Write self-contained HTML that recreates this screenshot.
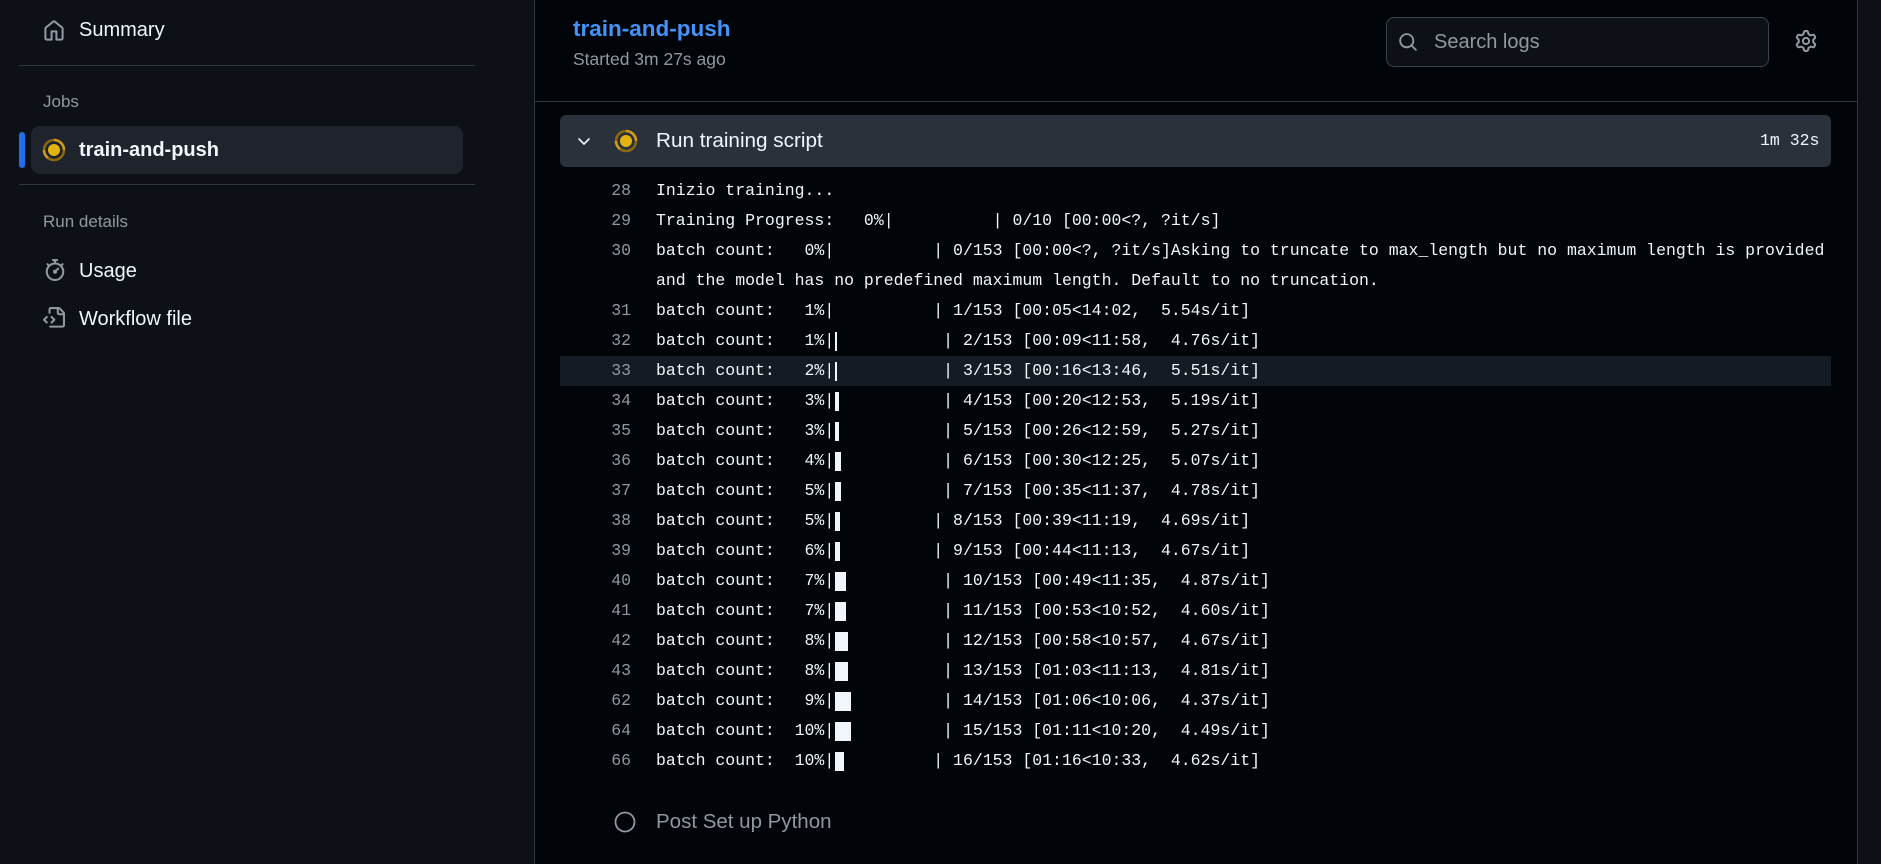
<!DOCTYPE html>
<html><head><meta charset="utf-8"><style>
*{margin:0;padding:0;box-sizing:border-box}
body{width:1881px;height:864px;background:#010409;overflow:hidden;position:relative;font-family:"Liberation Sans",sans-serif;color:#f0f6fc}
.abs{position:absolute}
#side{left:0;top:0;width:535px;height:864px;background:#0d1117;border-right:1px solid #30363d}
#rstrip{left:1857px;top:0;width:24px;height:864px;background:#0d1117;border-left:1px solid #30363d}
.nav{position:absolute;left:79px;font-size:20px;line-height:24px;color:#f0f6fc}
.hdr{position:absolute;left:43px;font-size:17px;color:#9198a1;line-height:20px}
.ico{position:absolute;fill:#9198a1}
.hr{position:absolute;left:19px;width:456px;height:1px;background:#30363d}
.log{position:absolute;left:560px;width:1271px;height:30px;font-family:"Liberation Mono","DejaVu Sans Mono",monospace;font-size:16.5px;line-height:30px;white-space:pre;color:#f0f6fc}
.log .n{position:absolute;right:1200px;color:#9198a1;text-align:right}
.log .t{position:absolute;left:96px}
.b{display:inline-block;position:relative;height:30px;vertical-align:top}
.b i{position:absolute;left:1px;top:6px;height:19px;background:#f0f6fc}
</style></head><body>
<div id="side" class="abs"></div>
<div id="rstrip" class="abs"></div>

<svg class="ico" style="left:43px;top:20px" width="22" height="22" viewBox="0 0 16 16"><path d="M6.906.664a1.749 1.749 0 0 1 2.187 0l5.25 4.2c.415.332.657.835.657 1.367v7.019A1.75 1.75 0 0 1 13.25 15h-3.5a.75.75 0 0 1-.75-.75V9H7v5.25a.75.75 0 0 1-.75.75h-3.5A1.75 1.75 0 0 1 1 13.25V6.23c0-.531.242-1.034.657-1.366l5.25-4.2Zm1.25 1.171a.25.25 0 0 0-.312 0l-5.250 4.2a.25.25 0 0 0-.094.196v7.019c0 .138.112.25.25.25H5.5V8.25a.75.75 0 0 1 .75-.75h3.5a.75.75 0 0 1 .75.75v5.25h2.75a.25.25 0 0 0 .25-.25V6.23a.25.25 0 0 0-.094-.195Z"/></svg>
<div class="nav" style="top:18px">Summary</div>
<div class="hr" style="top:65px"></div>
<div class="hdr" style="top:92px">Jobs</div>
<div class="abs" style="left:19px;top:132px;width:6px;height:36px;border-radius:3px;background:#1f6feb"></div>
<div class="abs" style="left:31px;top:126px;width:432px;height:48px;border-radius:9px;background:#1f242c"></div>
<svg class="abs" style="left:42px;top:138px" width="24" height="24" viewBox="0 0 24 24"><circle cx="12" cy="12" r="10" fill="none" stroke="#8a6a0e" stroke-width="2.5"/><path d="M12 2a10 10 0 0 1 10 10" fill="none" stroke="#d29922" stroke-width="2.5"/><path d="M2 12a10 10 0 0 0 4 8" fill="none" stroke="#d29922" stroke-width="2.5"/><circle cx="12" cy="12" r="6" fill="#e3b30f"/></svg>
<div class="nav" style="top:138px;font-weight:bold">train-and-push</div>
<div class="hr" style="top:184px"></div>
<div class="hdr" style="top:212px">Run details</div>
<svg class="ico" style="left:44px;top:259px" width="22" height="22" viewBox="0 0 16 16"><path d="M5.75.75A.75.75 0 0 1 6.5 0h3a.75.75 0 0 1 0 1.5h-.75v1l-.001.041a6.724 6.724 0 0 1 3.464 1.435l.007-.006.75-.75a.749.749 0 0 1 1.275.326.749.749 0 0 1-.215.734l-.75.75-.006.007a6.75 6.75 0 1 1-10.548 0L2.72 5.03l-.75-.75a.751.751 0 0 1 .018-1.042.751.751 0 0 1 1.042-.018l.75.75.007.006A6.72 6.72 0 0 1 7.25 2.541V1.5H6.5a.75.75 0 0 1-.75-.75ZM8 14.5A5.25 5.25 0 1 0 8 4a5.25 5.25 0 0 0 0 10.5Zm.389-6.7 1.33-1.33a.75.75 0 1 1 1.061 1.06L9.45 8.861A1.503 1.503 0 0 1 8 10.75a1.499 1.499 0 1 1 .389-2.95Z"/></svg>
<div class="nav" style="top:259px">Usage</div>
<svg class="ico" style="left:43px;top:307px" width="22" height="22" viewBox="0 0 16 16"><path d="M4 1.75C4 .784 4.784 0 5.750 0h5.586c.464 0 .909.184 1.237.513l2.914 2.914c.329.328.513.773.513 1.237v8.586A1.75 1.75 0 0 1 14.25 15h-9a.75.75 0 0 1 0-1.5h9a.25.25 0 0 0 .25-.25V6h-2.75A1.75 1.75 0 0 1 10 4.25V1.5H5.75a.25.25 0 0 0-.25.25v2.5a.75.75 0 0 1-1.5 0Zm1.72 4.970a.75.75 0 0 1 1.06 0l2 2a.75.75 0 0 1 0 1.06l-2 2a.749.749 0 0 1-1.275-.326.749.749 0 0 1 .215-.734l1.47-1.47-1.47-1.47a.75.75 0 0 1 0-1.06ZM3.28 7.78 1.81 9.25l1.47 1.47a.751.751 0 0 1-.018 1.042.751.751 0 0 1-1.042.018l-2-2a.75.75 0 0 1 0-1.06l2-2a.751.751 0 0 1 1.042.018.751.751 0 0 1 .018 1.042Zm8.22-6.218V4.25c0 .138.112.25.25.25h2.688l-.011-.013-2.914-2.914-.013-.011Z"/></svg>
<div class="nav" style="top:307px">Workflow file</div>

<div class="abs" style="left:573px;top:15px;font-size:22.5px;font-weight:bold;color:#4493f8;line-height:27px">train-and-push</div>
<div class="abs" style="left:573px;top:49px;font-size:17.5px;color:#9198a1;line-height:21px">Started 3m 27s ago</div>
<div class="abs" style="left:1386px;top:17px;width:383px;height:50px;border:1px solid #3d444d;border-radius:8px;background:#0d1117"></div>
<svg class="ico" style="left:1398px;top:32px" width="20" height="20" viewBox="0 0 16 16"><path d="M10.68 11.74a6 6 0 0 1-7.922-8.982 6 6 0 0 1 8.982 7.922l3.04 3.04a.749.749 0 0 1-.326 1.275.749.749 0 0 1-.734-.215ZM11.5 7a4.499 4.499 0 1 0-8.997 0A4.499 4.499 0 0 0 11.5 7Z"/></svg>
<div class="abs" style="left:1434px;top:30px;font-size:20px;color:#9198a1;line-height:24px">Search logs</div>
<svg class="ico" style="left:1795px;top:30px" width="22" height="22" viewBox="0 0 16 16"><path d="M8 0a8.2 8.2 0 0 1 .701.031C9.444.095 9.99.645 10.16 1.29l.288 1.107c.018.066.079.158.212.224.231.114.454.243.668.386.123.082.233.09.299.071l1.103-.303c.644-.176 1.392.021 1.820.63.27.385.506.792.704 1.218.315.675.111 1.422-.364 1.891l-.814.806c-.049.048-.098.147-.088.294.016.257.016.515 0 .772-.01.147.038.246.088.294l.814.806c.475.469.679 1.216.364 1.891a7.977 7.977 0 0 1-.704 1.217c-.428.61-1.176.807-1.82.63l-1.102-.302c-.067-.019-.177-.011-.3.071a5.909 5.909 0 0 1-.668.386c-.133.066-.194.158-.211.224l-.29 1.106c-.168.646-.715 1.196-1.458 1.26a8.006 8.006 0 0 1-1.402 0c-.743-.064-1.289-.614-1.458-1.26l-.289-1.106c-.018-.066-.079-.158-.212-.224a5.738 5.738 0 0 1-.668-.386c-.123-.082-.233-.09-.299-.071l-1.103.303c-.644.176-1.392-.021-1.82-.63a8.12 8.12 0 0 1-.704-1.218c-.315-.675-.111-1.422.363-1.891l.815-.806c.05-.048.098-.147.088-.294a6.214 6.214 0 0 1 0-.772c.01-.147-.038-.246-.088-.294l-.815-.806C.635 6.045.431 5.298.746 4.623a7.920 7.920 0 0 1 .704-1.217c.428-.61 1.176-.807 1.82-.63l1.102.302c.067.019.177.011.3-.071.214-.143.437-.272.668-.386.133-.066.194-.158.211-.224l.29-1.106C6.009.645 6.556.095 7.299.03 7.53.01 7.764 0 8 0Zm-.571 1.525c-.036.003-.108.036-.137.146l-.289 1.105c-.147.561-.549.967-.998 1.189-.173.086-.34.183-.5.29-.417.278-.97.423-1.529.27l-1.103-.303c-.109-.03-.175.016-.195.045-.22.312-.412.644-.573.99-.014.031-.021.11.059.19l.815.806c.411.406.562.957.53 1.456a4.709 4.709 0 0 0 0 .582c.032.499-.119 1.05-.53 1.456l-.815.806c-.081.08-.073.159-.059.19.162.346.353.677.573.989.02.03.085.076.195.046l1.102-.303c.56-.153 1.113-.008 1.53.27.161.107.328.204.501.29.447.222.85.629.997 1.189l.289 1.105c.029.109.101.143.137.146a6.6 6.6 0 0 0 1.142 0c.036-.003.108-.036.137-.146l.289-1.105c.147-.561.549-.967.998-1.189.173-.086.34-.183.5-.29.417-.278.97-.423 1.529-.27l1.103.303c.109.029.175-.016.195-.045.22-.313.411-.644.573-.99.014-.031.021-.11-.059-.19l-.815-.806c-.411-.406-.562-.957-.53-1.456a4.709 4.709 0 0 0 0-.582c-.032-.499.119-1.05.53-1.456l.815-.806c.081-.08.073-.159.059-.19a6.464 6.464 0 0 0-.573-.989c-.02-.03-.085-.076-.195-.046l-1.102.303c-.56.153-1.113.008-1.53-.27a4.44 4.44 0 0 0-.501-.29c-.447-.222-.85-.629-.997-1.189l-.289-1.105c-.029-.11-.101-.143-.137-.146a6.6 6.6 0 0 0-1.142 0ZM11 8a3 3 0 1 1-6 0 3 3 0 0 1 6 0ZM9.5 8a1.5 1.5 0 1 0-3.001.001A1.5 1.5 0 0 0 9.5 8Z"/></svg>
<div class="abs" style="left:535px;top:101px;width:1322px;height:1px;background:#30363d"></div>

<div class="abs" style="left:560px;top:115px;width:1271px;height:52px;border-radius:6px;background:#2b313b"></div>
<svg class="abs" style="left:576px;top:133px" width="16" height="16" viewBox="0 0 16 16"><path d="M3 6l5 5 5-5" fill="none" stroke="#f0f6fc" stroke-width="1.6" stroke-linecap="round" stroke-linejoin="round"/></svg>
<svg class="abs" style="left:614px;top:129px" width="24" height="24" viewBox="0 0 24 24"><circle cx="12" cy="12" r="10" fill="none" stroke="#8a6a0e" stroke-width="2.5"/><path d="M12 2a10 10 0 0 1 10 10" fill="none" stroke="#d29922" stroke-width="2.5"/><path d="M2 12a10 10 0 0 0 4 8" fill="none" stroke="#d29922" stroke-width="2.5"/><circle cx="12" cy="12" r="6" fill="#e3b30f"/></svg>
<div class="abs" style="left:656px;top:128px;font-size:20.7px;line-height:25px">Run training script</div>
<div class="abs" style="left:1760px;top:130px;font-family:'Liberation Mono',monospace;font-size:16.5px;line-height:22px">1m 32s</div>

<div class="abs" style="left:560px;top:356px;width:1271px;height:30px;background:#151b23"></div>

<div class="log" style="top:176px"><span class="n">28</span><span class="t">Inizio training...</span></div>
<div class="log" style="top:206px"><span class="n">29</span><span class="t">Training Progress:   0%|          | 0/10 [00:00&lt;?, ?it/s]</span></div>
<div class="log" style="top:236px"><span class="n">30</span><span class="t">batch count:   0%|          | 0/153 [00:00&lt;?, ?it/s]Asking to truncate to max_length but no maximum length is provided</span></div>
<div class="log" style="top:266px"><span class="t">and the model has no predefined maximum length. Default to no truncation.</span></div>
<div class="log" style="top:296px"><span class="n">31</span><span class="t">batch count:   1%|          | 1/153 [00:05&lt;14:02,  5.54s/it]</span></div>
<div class="log" style="top:326px"><span class="n">32</span><span class="t">batch count:   1%|<span class="b" style="width:2ch"><i style="width:2px"></i></span>         | 2/153 [00:09&lt;11:58,  4.76s/it]</span></div>
<div class="log" style="top:356px"><span class="n">33</span><span class="t">batch count:   2%|<span class="b" style="width:2ch"><i style="width:2px"></i></span>         | 3/153 [00:16&lt;13:46,  5.51s/it]</span></div>
<div class="log" style="top:386px"><span class="n">34</span><span class="t">batch count:   3%|<span class="b" style="width:2ch"><i style="width:4px"></i></span>         | 4/153 [00:20&lt;12:53,  5.19s/it]</span></div>
<div class="log" style="top:416px"><span class="n">35</span><span class="t">batch count:   3%|<span class="b" style="width:2ch"><i style="width:4px"></i></span>         | 5/153 [00:26&lt;12:59,  5.27s/it]</span></div>
<div class="log" style="top:446px"><span class="n">36</span><span class="t">batch count:   4%|<span class="b" style="width:2ch"><i style="width:6px"></i></span>         | 6/153 [00:30&lt;12:25,  5.07s/it]</span></div>
<div class="log" style="top:476px"><span class="n">37</span><span class="t">batch count:   5%|<span class="b" style="width:2ch"><i style="width:6px"></i></span>         | 7/153 [00:35&lt;11:37,  4.78s/it]</span></div>
<div class="log" style="top:506px"><span class="n">38</span><span class="t">batch count:   5%|<span class="b" style="width:1ch"><i style="width:5px"></i></span>         | 8/153 [00:39&lt;11:19,  4.69s/it]</span></div>
<div class="log" style="top:536px"><span class="n">39</span><span class="t">batch count:   6%|<span class="b" style="width:1ch"><i style="width:5px"></i></span>         | 9/153 [00:44&lt;11:13,  4.67s/it]</span></div>
<div class="log" style="top:566px"><span class="n">40</span><span class="t">batch count:   7%|<span class="b" style="width:2ch"><i style="width:11px"></i></span>         | 10/153 [00:49&lt;11:35,  4.87s/it]</span></div>
<div class="log" style="top:596px"><span class="n">41</span><span class="t">batch count:   7%|<span class="b" style="width:2ch"><i style="width:11px"></i></span>         | 11/153 [00:53&lt;10:52,  4.60s/it]</span></div>
<div class="log" style="top:626px"><span class="n">42</span><span class="t">batch count:   8%|<span class="b" style="width:2ch"><i style="width:13px"></i></span>         | 12/153 [00:58&lt;10:57,  4.67s/it]</span></div>
<div class="log" style="top:656px"><span class="n">43</span><span class="t">batch count:   8%|<span class="b" style="width:2ch"><i style="width:13px"></i></span>         | 13/153 [01:03&lt;11:13,  4.81s/it]</span></div>
<div class="log" style="top:686px"><span class="n">62</span><span class="t">batch count:   9%|<span class="b" style="width:2ch"><i style="width:16px"></i></span>         | 14/153 [01:06&lt;10:06,  4.37s/it]</span></div>
<div class="log" style="top:716px"><span class="n">64</span><span class="t">batch count:  10%|<span class="b" style="width:2ch"><i style="width:16px"></i></span>         | 15/153 [01:11&lt;10:20,  4.49s/it]</span></div>
<div class="log" style="top:746px"><span class="n">66</span><span class="t">batch count:  10%|<span class="b" style="width:1ch"><i style="width:9px"></i></span>         | 16/153 [01:16&lt;10:33,  4.62s/it]</span></div>

<svg class="abs" style="left:613px;top:810px" width="24" height="24" viewBox="0 0 24 24"><circle cx="12" cy="12" r="9.5" fill="none" stroke="#9198a1" stroke-width="1.8"/></svg>
<div class="abs" style="left:656px;top:809px;font-size:20.5px;line-height:25px;color:#9198a1">Post Set up Python</div>
</body></html>
